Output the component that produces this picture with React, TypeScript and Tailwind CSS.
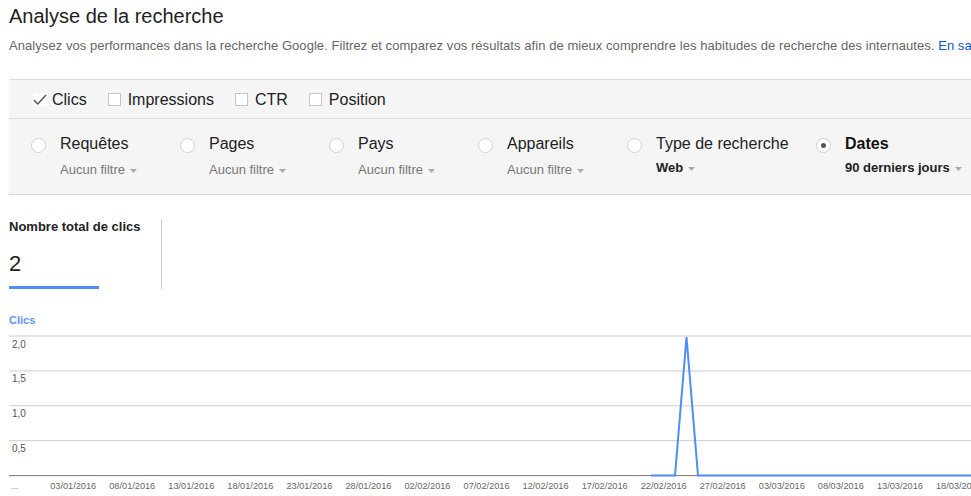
import React from 'react';

const metrics = [
  { label: 'Clics', checked: true },
  { label: 'Impressions', checked: false },
  { label: 'CTR', checked: false },
  { label: 'Position', checked: false },
];

const filters = [
  { title: 'Requêtes', value: 'Aucun filtre', width: 'w-[149px]' },
  { title: 'Pages', value: 'Aucun filtre', width: 'w-[149px]' },
  { title: 'Pays', value: 'Aucun filtre', width: 'w-[149px]' },
  { title: 'Appareils', value: 'Aucun filtre', width: 'w-[149px]' },
  { title: 'Type de recherche', value: 'Web', width: 'w-[189px]', set: true },
  { title: 'Dates', value: '90 derniers jours', width: 'w-[150px]', set: true, selected: true },
];

const dates = [
  '03/01/2016', '08/01/2016', '13/01/2016', '18/01/2016', '23/01/2016', '28/01/2016',
  '02/02/2016', '07/02/2016', '12/02/2016', '17/02/2016', '22/02/2016', '27/02/2016',
  '03/03/2016', '08/03/2016', '13/03/2016', '18/03/2016',
];

const yLabels = ['2,0', '1,5', '1,0', '0,5'];

function Caret() {
  return (
    <svg width="7" height="4" viewBox="0 0 7 4" className="ml-[5px] mt-[1px]">
      <polygon points="0,0 7,0 3.5,4" fill="#aaa" />
    </svg>
  );
}

function MetricToggle({ label, checked }: { label: string; checked: boolean }) {
  return (
    <label className="flex items-center mr-[21px]">
      {checked ? (
        <span className="w-[14px] h-[13px] bg-white flex items-center justify-center">
          <svg width="14" height="12" viewBox="0 0 14 12">
            <path d="M1 6 L4.8 10 L13 1" fill="none" stroke="#555" strokeWidth="1.5" />
          </svg>
        </span>
      ) : (
        <span className="w-[13px] h-[13px] bg-white border border-[#c6c6c6]" />
      )}
      <span className={checked ? 'ml-[5px]' : 'ml-[7px]'}>{label}</span>
    </label>
  );
}

function Chart() {
  const top = 5;
  const step = 34.9;
  const base = top + step * 4;
  const line = '642,' + base + ' 666,' + base + ' 677.5,' + (top + 1) + ' 689,' + base + ' 962,' + base;
  return (
    <svg width="962" height="166" viewBox="0 0 962 166" className="block">
      {[0, 1, 2, 3].map((i) => (
        <g key={i}>
          <line x1="0" x2="962" y1={top + i * step} y2={top + i * step} stroke="#cccccc" strokeWidth="1" />
          <text x="3" y={top + i * step + 11.5} fontSize="10" fill="#555">{yLabels[i]}</text>
        </g>
      ))}
      <line x1="0" x2="962" y1={base} y2={base} stroke="#777" strokeWidth="1" />
      <polyline points={line} fill="none" stroke="#4d8ef7" strokeWidth="2" strokeLinejoin="miter" />
      <text x="2" y="158" fontSize="9" fill="#888">...</text>
      {dates.map((d, i) => (
        <text key={d} x={64.2 + i * 59.05} y="158.3" fontSize="9.2" fill="#666" textAnchor="middle">{d}</text>
      ))}
    </svg>
  );
}

export default function App() {
  return (
    <div className="w-[971px] h-[496px] overflow-hidden bg-white font-['Liberation_Sans',Arial,sans-serif] text-[#222]">
      <div className="pl-[9px]">
        <h1 className="pt-[4px] text-[20px] leading-[24px] text-[#222]">Analyse de la recherche</h1>
        <p className="mt-[10px] text-[13px] leading-[16px] text-[#666] whitespace-nowrap tracking-[0.06px]">
          Analysez vos performances dans la recherche Google. Filtrez et comparez vos résultats afin de mieux comprendre les habitudes de recherche des internautes.{' '}
          <a className="text-[#1155cc]">En savoir plus</a>
        </p>

        <section className="mt-[25px] bg-[#f5f5f5] border-t border-b border-[#dadada] w-[1100px]">
          <div className="h-[39px] flex items-center pl-[24px] pt-[1px] text-[16px] leading-[18px] border-b border-[#dadada]">
            {metrics.map((m) => (
              <MetricToggle key={m.label} label={m.label} checked={m.checked} />
            ))}
          </div>
          <div className="h-[75px] flex pl-[22px] pt-[16px]">
            {filters.map((f) => (
              <div key={f.title} className={'flex items-start shrink-0 ' + f.width}>
                <span className="mt-[3px] w-[15px] h-[15px] rounded-full bg-white border border-[#d0d0d0] flex items-center justify-center">
                  {f.selected && <span className="w-[5px] h-[5px] rounded-full bg-[#555]" />}
                </span>
                <div className="ml-[14px]">
                  <p className={'text-[16px] leading-[18px] whitespace-nowrap ' + (f.selected ? 'font-bold text-[#111]' : '')}>
                    {f.title}
                  </p>
                  {f.set ? (
                    <p className="mt-[7px] flex items-center text-[13px] leading-[16px] font-bold text-[#222] whitespace-nowrap">
                      {f.value}
                      <Caret />
                    </p>
                  ) : (
                    <p className="mt-[9px] flex items-center text-[13px] leading-[16px] text-[#777] whitespace-nowrap">
                      {f.value}
                      <Caret />
                    </p>
                  )}
                </div>
              </div>
            ))}
          </div>
        </section>

        <section className="mt-[24px] flex">
          <div className="w-[153px] h-[70px] border-r border-[#cccccc]">
            <p className="text-[13px] leading-[16px] font-bold text-[#222]">Nombre total de clics</p>
            <p className="mt-[16px] text-[22px] leading-[26px] text-[#222]">2</p>
            <div className="mt-[9px] w-[90px] h-[3px] bg-[#4d8ef7]" />
          </div>
        </section>

        <p className="mt-[25px] text-[11px] leading-[13px] font-bold text-[#5e96f7]">Clics</p>
        <div className="mt-[4px]">
          <Chart />
        </div>
      </div>
    </div>
  );
}
